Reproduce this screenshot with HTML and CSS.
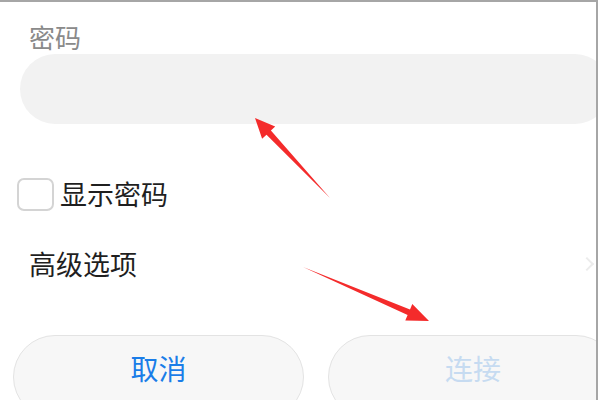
FILE: index.html
```html
<!DOCTYPE html>
<html lang="zh-CN">
<head>
    <meta charset="UTF-8">
    <meta name="viewport" content="width=device-width, initial-scale=1.0">
    <title>密码</title>
    <link rel="stylesheet" href="styles.css">
</head>
<body>
    <div class="screen">
        <div class="field">
            <label class="field-label" for="pwd">密码</label>
            <div class="field-input" id="pwd"></div>
        </div>

        <div class="check-row">
            <span class="checkbox"></span>
            <span class="check-text">显示密码</span>
        </div>

        <div class="advanced-row">
            <span class="advanced-text">高级选项</span>
            <span class="chevron"></span>
        </div>

        <div class="actions">
            <button class="btn btn-cancel">取消</button>
            <button class="btn btn-connect">连接</button>
        </div>

        <!-- annotation arrows -->
        <svg class="marks" width="600" height="400" viewBox="0 0 600 400">
            <polygon points="330,198 266.5,134.7 262.1,138.8 255,118 275.2,126.4 270.9,130.5" />
            <polygon points="303,267 410,309.5 412.3,304 429,321 405.3,320.6 407.6,315.1" />
        </svg>
    </div>
</body>
</html>
```

FILE: styles.css
```css
* {
    margin: 0;
    padding: 0;
    box-sizing: border-box;
}

html, body {
    background: #fff;
}

body {
    font-family: "Noto Sans CJK SC", "Noto Sans", sans-serif;
    color: #1f1f1f;
}

.screen {
    position: relative;
    width: 598px;
    height: 400px;
    border-top: 2px solid #a6a6a6;
    border-right: 2px solid #a6a6a6;
    overflow: hidden;
}

.field {
    display: flex;
    flex-direction: column;
    padding-top: 20px;
}

.field-label {
    margin-left: 29px;
    font-size: 26px;
    line-height: 30px;
    color: #8a8a8a;
}

.field-input {
    margin-left: 20px;
    margin-top: 2px;
    width: 590px;
    height: 70px;
    flex: none;
    background: #f2f2f2;
    border-radius: 35px;
}

.check-row {
    display: flex;
    align-items: center;
    gap: 6px;
    margin-top: 53px;
    margin-left: 17px;
}

.checkbox {
    width: 37px;
    height: 33px;
    border: 2px solid #d4d4d4;
    border-radius: 7px;
    background: #fff;
}

.check-text {
    font-size: 27px;
    line-height: 34px;
}

.advanced-row {
    display: flex;
    align-items: center;
    justify-content: space-between;
    margin-top: 36px;
    padding-left: 29px;
}

.advanced-text {
    font-size: 27px;
    line-height: 34px;
}

.chevron {
    width: 10px;
    height: 10px;
    margin-right: 4px;
    border-top: 2px solid #ececec;
    border-right: 2px solid #ececec;
    transform: rotate(45deg);
}

.actions {
    display: flex;
    gap: 24px;
    margin-top: 54px;
    margin-left: 13px;
}

.btn {
    flex: none;
    height: 84px;
    border: 1px solid #e3e3e3;
    border-radius: 42px;
    background: #f7f7f7;
    font-family: inherit;
    font-size: 28px;
    line-height: 34px;
    padding-bottom: 18px;
}

.btn-cancel {
    width: 291px;
    color: #1a7de8;
}

.btn-connect {
    width: 290px;
    color: #c6dbf1;
}

.marks {
    position: absolute;
    top: -2px;
    left: 0;
    fill: #f42b2b;
}
```
